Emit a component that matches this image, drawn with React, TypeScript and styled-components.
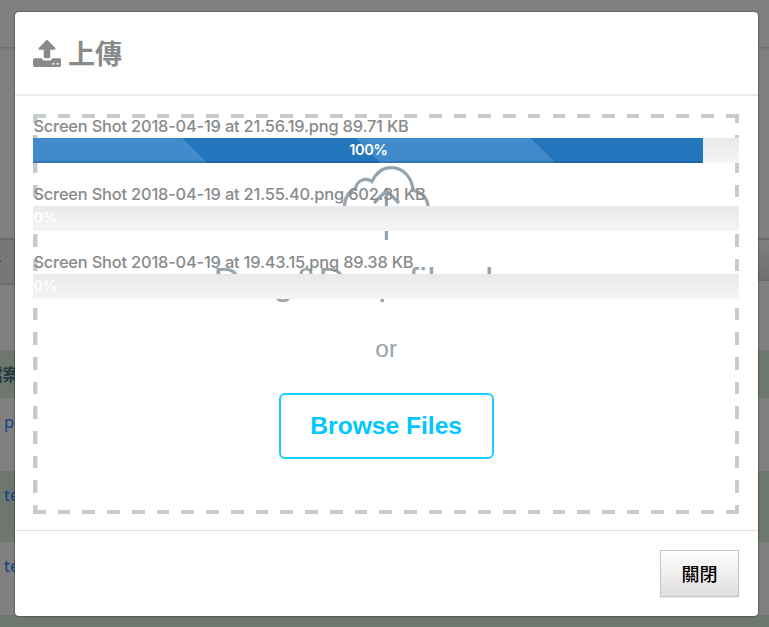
import React from "react";
import styled, { createGlobalStyle } from "styled-components";

const Global = createGlobalStyle`
  * { box-sizing: border-box; }
  body { margin: 0; overflow: hidden; font-family: Inter, "Noto Sans CJK TC", sans-serif; }
`;

const Page = styled.div`
  position: relative;
  width: 769px;
  height: 627px;
  overflow: hidden;
  background: #808080;
`;
const TopBar = styled.div`
  height: 48px;
  border-bottom: 1px solid #6f6f6f;
  box-shadow: 0 1px 1px #787878;
`;
const Spacer = styled.div`
  height: 190px;
`;
const Toolbar = styled.div`
  display: flex;
  justify-content: space-between;
  height: 47px;
`;
const ToolbarPiece = styled.div<{ $right?: boolean }>`
  width: ${(p) => (p.$right ? 120 : 200)}px;
  height: ${(p) => (p.$right ? 43 : 47)}px;
  border: solid #6b6b6b;
  border-width: 2px 0;
  background: ${(p) => (p.$right ? "linear-gradient(#808080, #6f6f6f)" : "#757779")};
  line-height: 42px;
  font-size: 15px;
  color: #333;
  text-indent: -5px;
`;
const Table = styled.div`
  padding-top: 65px;
`;
const Row = styled.div<{ $tint?: boolean; $h: number }>`
  height: ${(p) => p.$h}px;
  padding: 12px 0 0 4px;
  background: ${(p) => (p.$tint ? "#6d776e" : "#808080")};
  font: 16.5px/24px "Noto Sans", sans-serif;
  color: #153f80;
`;
const HeadRow = styled(Row)`
  padding-left: 0;
  text-indent: -14px;
  font: bold 16.5px/24px "Noto Sans CJK TC", sans-serif;
  color: #243a40;
`;

const Modal = styled.section`
  position: absolute;
  left: 15px;
  top: 12px;
  width: 743px;
  height: 604px;
  display: flex;
  flex-direction: column;
  border-radius: 4px;
  background: #fff;
  box-shadow: 0 0 2px rgba(0, 0, 0, 0.75);
`;
const Header = styled.header`
  display: flex;
  align-items: center;
  gap: 7px;
  height: 84px;
  padding: 0 18px;
  border-bottom: 2px solid #ebebeb;
  color: #8a8a8a;
`;
const Title = styled.h1`
  margin: 0;
  font: bold 27px/40px "Noto Sans CJK TC", sans-serif;
`;
const Body = styled.div`
  display: grid;
  height: 434px;
  padding: 18px 19px 0 18.4px;
  & > * { grid-area: 1 / 1; }
`;
const dashX = "repeating-linear-gradient(90deg, #c6cbce 0 12.7px, transparent 12.7px 24.74px)";
const dashY = "repeating-linear-gradient(0deg, #c6cbce 0 9px, transparent 9px 21px, #c6cbce 21px 24.65px)";
const DropZone = styled.div`
  display: flex;
  flex-direction: column;
  align-items: center;
  height: 400px;
  padding-top: 50px;
  background:
    ${dashX} 0 0 / 100% 4px no-repeat,
    ${dashX} 0 100% / 100% 4px no-repeat,
    ${dashY} 0 0 / 4.5px 100% no-repeat,
    ${dashY} 100% 0 / 4px 100% no-repeat;
  font-family: "Liberation Sans", sans-serif;
  color: #97a4ad;
`;
const DropTitle = styled.div`
  margin-top: 17px;
  font-size: 37px;
  line-height: 42px;
  white-space: nowrap;
`;
const Or = styled.div`
  margin-top: 32px;
  font-size: 24.5px;
  line-height: 28px;
`;
const Browse = styled.button`
  width: 215px;
  height: 66px;
  padding: 0;
  margin-top: 30px;
  border: 2px solid #1acfff;
  border-radius: 6px;
  background: #fff;
  font: bold 24.6px "Liberation Sans", sans-serif;
  color: #00c7ff;
`;
const Uploads = styled.ul`
  z-index: 1;
  margin: 0;
  padding: 0;
  list-style: none;
`;
const Upload = styled.li`
  height: 68.2px;
`;
const FileName = styled.div`
  height: 24px;
  line-height: 24px;
  font-size: 16.4px;
  font-weight: 450;
  letter-spacing: -0.18px;
  white-space: nowrap;
  color: #8a8a8a;
`;
const Track = styled.div`
  height: 25px;
  background: linear-gradient(#e9e9e9, #f5f5f5);
`;
const Fill = styled.div<{ $done: boolean }>`
  width: ${(p) => (p.$done ? "670px" : "0")};
  height: 25px;
  box-shadow: ${(p) => (p.$done ? "inset 0 -2px 0 rgba(0, 30, 90, 0.2)" : "none")};
  background: repeating-linear-gradient(45deg, #428bca 0 123.7px, #2376bb 123.7px 246px);
  text-align: center;
  font-size: 14.6px;
  font-weight: 600;
  letter-spacing: -0.45px;
  line-height: 24px;
  color: #fff;
`;
const Footer = styled.footer`
  display: flex;
  justify-content: flex-end;
  flex: 1;
  padding: 19px 19px 0;
  border-top: 1px solid #e2e2e2;
`;
const Close = styled.button`
  width: 79px;
  height: 47px;
  padding: 0 0 1px;
  border: 1px solid #c6c6c6;
  background: linear-gradient(#fff, #dedede);
  box-shadow: 0 1px 1px #ececec;
  font: 500 18px "Noto Sans CJK TC", sans-serif;
  color: #000;
`;

const UploadIcon = () => (
  <svg width="28" height="27" viewBox="0 64 1664 1600" fill="currentColor">
    <path d="M1280 1472q0-26-19-45t-45-19-45 19-19 45 19 45 45 19 45-19 19-45zm256 0q0-26-19-45t-45-19-45 19-19 45 19 45 45 19 45-19 19-45zm128-224v320q0 40-28 68t-68 28h-1472q-40 0-68-28t-28-68v-320q0-40 28-68t68-28h427q21 56 70.5 92t110.5 36h256q61 0 110.5-36t70.5-92h427q40 0 68 28t28 68zm-325-648q-17 40-59 40h-256v448q0 26-19 45t-45 19h-256q-26 0-45-19t-19-45v-448h-256q-42 0-59-40-17-39 14-69l448-448q18-19 45-19t45 19l448 448q31 30 14 69z" />
  </svg>
);

const CloudIcon = () => (
  <svg width="88" height="80" viewBox="0 0 88 80" fill="none" stroke="currentColor" strokeWidth="3.2">
    <path d="M32 61H21C9 61 2.6 52 2.6 42C2.6 34 7 27 13.5 24.5C15 16 24 13 30 17.5C34 9 41 3.6 49 3.6C61 3.6 70 13 71 26.5C80 28 86 35 86 43C86 53 79 61 68 61H54" />
    <path d="M44.4 76V24M32 39L44.4 26.5L57 39" />
  </svg>
);

const files = [
  { name: "Screen Shot 2018-04-19 at 21.56.19.png 89.71 KB", progress: 100 },
  { name: "Screen Shot 2018-04-19 at 21.55.40.png 602.31 KB", progress: 0 },
  { name: "Screen Shot 2018-04-19 at 19.43.15.png 89.38 KB", progress: 0 },
];

export default function App() {
  return (
    <Page>
      <Global />
      <TopBar />
      <Spacer />
      <Toolbar>
        <ToolbarPiece>-</ToolbarPiece>
        <ToolbarPiece $right />
      </Toolbar>
      <Table>
        <HeadRow $tint $h={48}>檔案</HeadRow>
        <Row $h={73}>p</Row>
        <Row $tint $h={71}>te</Row>
        <Row $h={73}>te</Row>
        <Row $tint $h={20} />
      </Table>
      <Modal>
        <Header>
          <UploadIcon />
          <Title>上傳</Title>
        </Header>
        <Body>
          <DropZone>
            <CloudIcon />
            <DropTitle>Drag&amp;Drop files here</DropTitle>
            <Or>or</Or>
            <Browse>Browse Files</Browse>
          </DropZone>
          <Uploads>
            {files.map((f) => (
              <Upload key={f.name}>
                <FileName>{f.name}</FileName>
                <Track>
                  <Fill $done={f.progress === 100}>{f.progress}%</Fill>
                </Track>
              </Upload>
            ))}
          </Uploads>
        </Body>
        <Footer>
          <Close>關閉</Close>
        </Footer>
      </Modal>
    </Page>
  );
}
